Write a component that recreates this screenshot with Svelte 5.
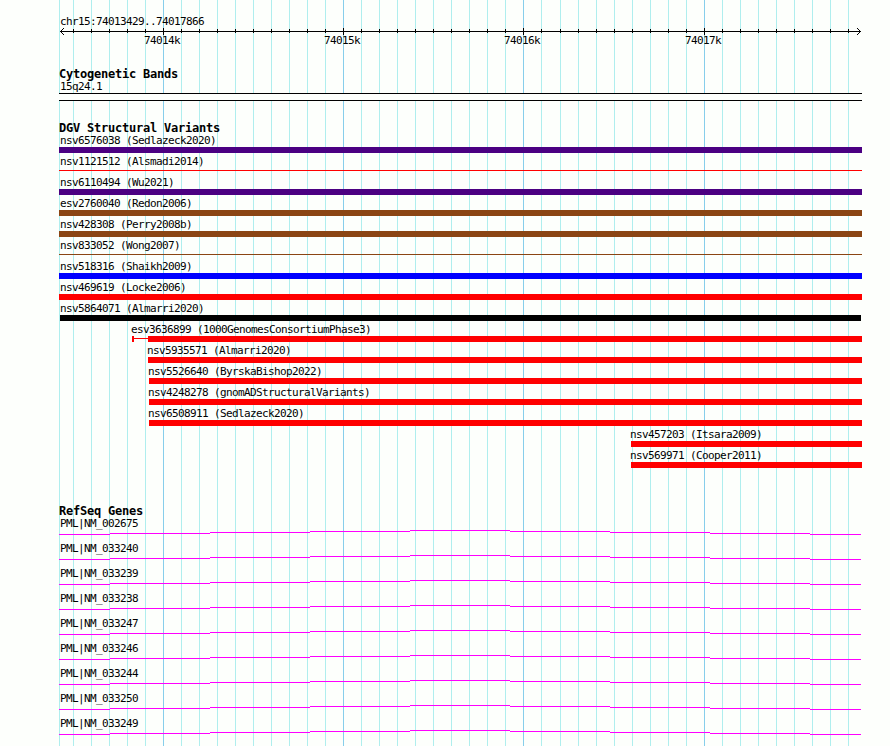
<script lang="ts">
  type Variant = {
    name: string
    color: string
    start?: number
    end?: number
    thin?: boolean
    labelAt?: number
    whisker?: number
  }

  const height = 746
  const left = 59
  const right = 862

  // x position of every 100 bp grid line
  const grid: number[] = []
  for (let x = 73; x <= 541; x += 18) grid.push(x)
  for (let x = 560; x <= 848; x += 18) grid.push(x)

  const major = [
    { x: 163, label: '74014k' },
    { x: 343, label: '74015k' },
    { x: 523, label: '74016k' },
    { x: 704, label: '74017k' },
  ]
  const isMajor = (x: number) => major.some((m) => m.x === x)

  const variants: Variant[] = [
    { name: 'nsv6576038 (Sedlazeck2020)', color: '#4b0082' },
    { name: 'nsv1121512 (Alsmadi2014)', color: '#ff0000', thin: true },
    { name: 'nsv6110494 (Wu2021)', color: '#4b0082' },
    { name: 'esv2760040 (Redon2006)', color: '#8b4513' },
    { name: 'nsv428308 (Perry2008b)', color: '#8b4513' },
    { name: 'nsv833052 (Wong2007)', color: '#8b4513', thin: true },
    { name: 'nsv518316 (Shaikh2009)', color: '#0000ff' },
    { name: 'nsv469619 (Locke2006)', color: '#ff0000' },
    { name: 'nsv5864071 (Almarri2020)', color: '#000000', start: 60, end: 861 },
    { name: 'esv3636899 (1000GenomesConsortiumPhase3)', color: '#ff0000', start: 148, labelAt: 131, whisker: 132 },
    { name: 'nsv5935571 (Almarri2020)', color: '#ff0000', start: 148, labelAt: 147 },
    { name: 'nsv5526640 (ByrskaBishop2022)', color: '#ff0000', start: 149, labelAt: 148 },
    { name: 'nsv4248278 (gnomADStructuralVariants)', color: '#ff0000', start: 149, labelAt: 148 },
    { name: 'nsv6508911 (Sedlazeck2020)', color: '#ff0000', start: 149, labelAt: 148 },
    { name: 'nsv457203 (Itsara2009)', color: '#ff0000', start: 631, labelAt: 630 },
    { name: 'nsv569971 (Cooper2011)', color: '#ff0000', start: 631, labelAt: 630 },
  ]

  const genes = ['002675', '033240', '033239', '033238', '033247', '033246', '033244', '033250', '033249']

  // introns are drawn as a shallow stepped arch
  const steps = [
    [59, 110, 4],
    [110, 210, 3],
    [210, 310, 2],
    [310, 410, 1],
    [410, 510, 0],
    [510, 610, 1],
    [610, 710, 2],
    [710, 810, 3],
    [810, 861, 4],
  ]
</script>

<main class="browser">
  <svg class="grid" width="890" {height} shape-rendering="crispEdges">
    <rect x={left} y="0" width="1" {height} fill="#afeeee" />
    {#each grid as x}
      <rect {x} y="0" width="1" {height} fill={isMajor(x) ? '#87ceeb' : '#afeeee'} />
    {/each}
  </svg>

  <header class="ruler">
    <div class="label">chr15:74013429..74017866</div>
    <svg class="scale" width="890" height="8" shape-rendering="crispEdges">
      <rect x="60" y="4" width="801" height="1" />
      {#each grid as x}
        {#if isMajor(x)}
          <rect {x} y="1" width="1" height="7" />
        {:else}
          <rect {x} y="2" width="1" height="4" />
        {/if}
      {/each}
      {#each [1, 2, 3] as d}
        <rect x={60 + d} y={4 - d} width="1" height="1" />
        <rect x={60 + d} y={4 + d} width="1" height="1" />
        <rect x={860 - d} y={4 - d} width="1" height="1" />
        <rect x={860 - d} y={4 + d} width="1" height="1" />
      {/each}
    </svg>
    <svg class="ticks" width="890" height="14">
      {#each major as m}
        <text x={m.x - 19} y="9">{m.label}</text>
      {/each}
    </svg>
  </header>

  <section class="cyto">
    <h2>Cytogenetic Bands</h2>
    <div class="label">15q24.1</div>
    <div class="band"></div>
  </section>

  <section class="variants">
    <h2>DGV Structural Variants</h2>
    {#each variants as v}
      <div class="variant">
        <div class="label" style:padding-left="{v.labelAt ?? 60}px">{v.name}</div>
        <svg width="890" height="6" shape-rendering="crispEdges" fill={v.color}>
          {#if v.whisker}
            <rect x={v.whisker} y="0" width="2" height="6" />
            <rect x={v.whisker} y="2" width={(v.start ?? left) - v.whisker} height="1" />
          {/if}
          <rect
            x={v.start ?? left}
            y={v.thin ? 2 : 0}
            width={(v.end ?? right) - (v.start ?? left)}
            height={v.thin ? 1 : 6}
          />
        </svg>
      </div>
    {/each}
  </section>

  <section class="genes">
    <h2>RefSeq Genes</h2>
    {#each genes as gene}
      <div class="gene">
        <div class="label">PML|NM_{gene}</div>
        <svg width="890" height="5" shape-rendering="crispEdges" fill="#ff00ff">
          {#each steps as [from, to, y]}
            <rect x={from} {y} width={to - from} height="1" />
          {/each}
        </svg>
      </div>
    {/each}
  </section>
</main>

<style>
  :global(body) {
    background: #fdfffc;
  }

  .browser {
    position: relative;
    width: 890px;
    height: 746px;
    overflow: hidden;
    color: #000;
    font-family: "DejaVu Sans Mono", monospace;
    font-size: 11px;
    letter-spacing: -0.622px;
  }

  svg {
    display: block;
  }

  /* the grid runs behind all of the tracks */
  .grid {
    position: absolute;
    inset: 0;
    z-index: -1;
  }

  .label {
    height: 14px;
    padding-left: 60px;
    line-height: 16px;
    white-space: pre;
  }

  h2 {
    height: 12px;
    margin: 0;
    padding-left: 59px;
    font-size: 12px;
    font-weight: bold;
    line-height: 14px;
    letter-spacing: -0.224px;
    white-space: pre;
  }

  .ruler {
    height: 53px;
    padding-top: 14px;
  }

  .scale {
    margin-top: -1px;
  }

  .ticks {
    overflow: visible;
  }

  .cyto {
    height: 54px;
  }

  .band {
    width: 803px;
    height: 6px;
    margin-left: 59px;
    border-top: 1px solid #000;
    border-bottom: 1px solid #000;
    background: #fdfffc;
  }

  .variants {
    height: 383px;
  }

  .variant {
    height: 21px;
  }

  .gene {
    height: 25px;
  }
</style>
